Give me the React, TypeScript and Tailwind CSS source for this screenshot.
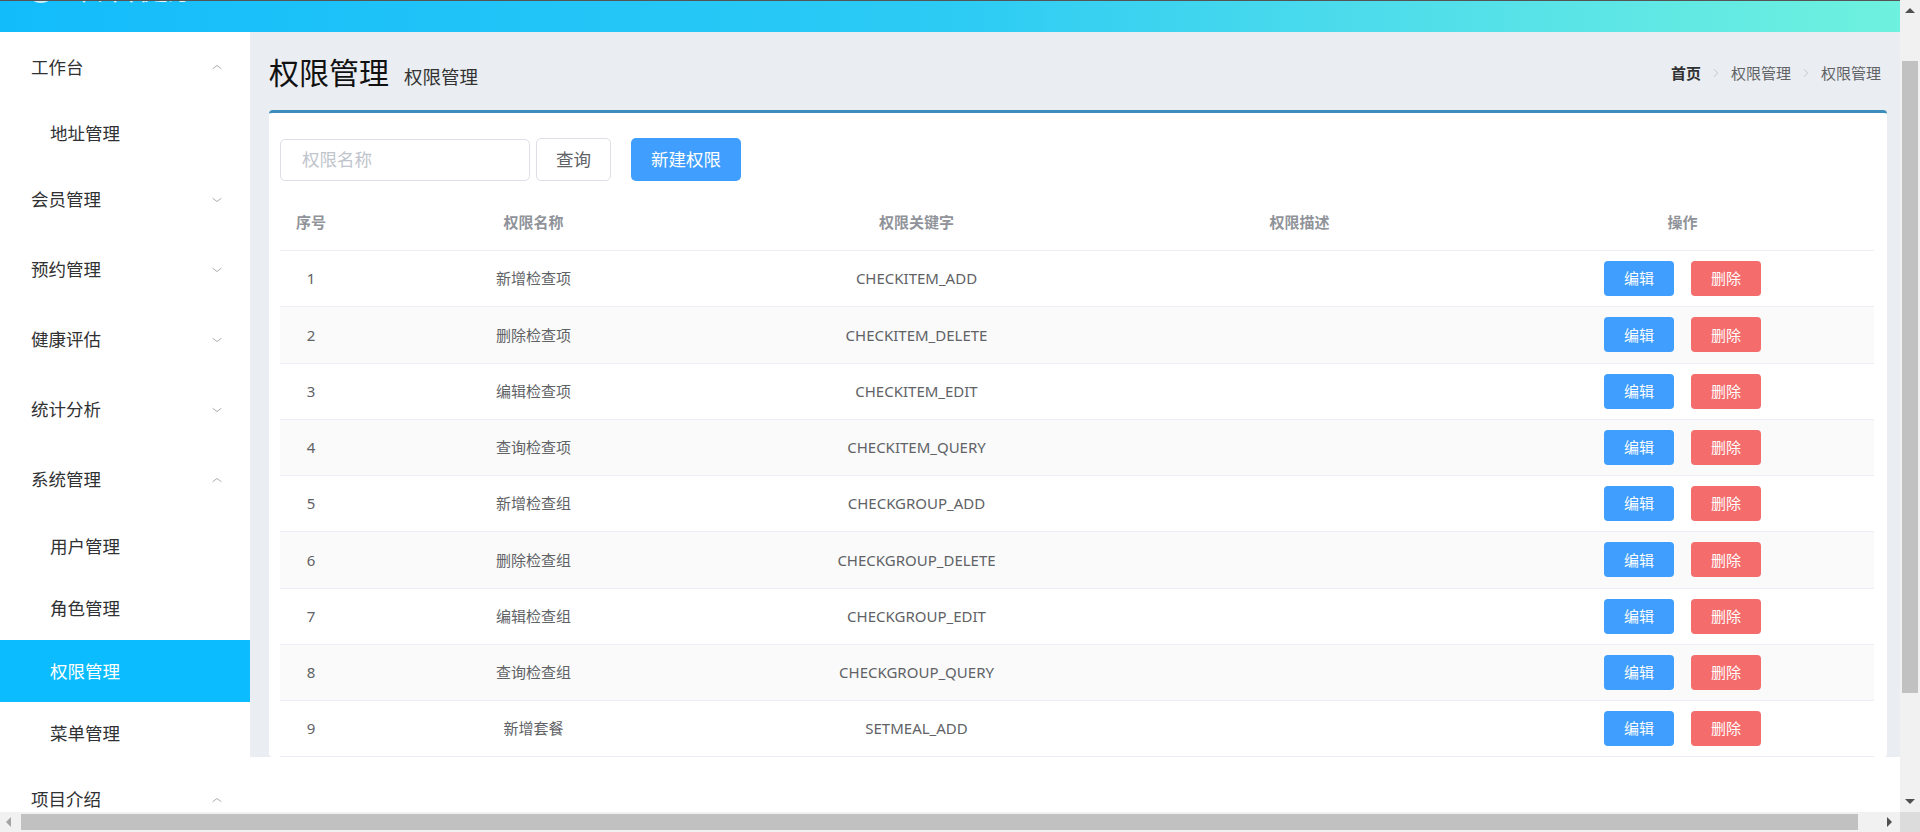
import { ChevronDown, ChevronUp, ChevronRight } from 'lucide-react';

const MENU: { label: string; open?: boolean; children?: string[] }[] = [
  { label: '工作台', open: true, children: ['地址管理'] },
  { label: '会员管理' },
  { label: '预约管理' },
  { label: '健康评估' },
  { label: '统计分析' },
  { label: '系统管理', open: true, children: ['用户管理', '角色管理', '权限管理', '菜单管理'] },
  { label: '项目介绍', open: true },
];

const ROWS = [
  { name: '新增检查项', key: 'CHECKITEM_ADD' },
  { name: '删除检查项', key: 'CHECKITEM_DELETE' },
  { name: '编辑检查项', key: 'CHECKITEM_EDIT' },
  { name: '查询检查项', key: 'CHECKITEM_QUERY' },
  { name: '新增检查组', key: 'CHECKGROUP_ADD' },
  { name: '删除检查组', key: 'CHECKGROUP_DELETE' },
  { name: '编辑检查组', key: 'CHECKGROUP_EDIT' },
  { name: '查询检查组', key: 'CHECKGROUP_QUERY' },
  { name: '新增套餐', key: 'SETMEAL_ADD' },
];

function Sidebar() {
  return (
    <div className="w-[250px] shrink-0 bg-white overflow-hidden">
      {MENU.map((m) => (
        <div key={m.label}>
          <div className="h-[70px] flex items-center justify-between pl-[31px] pr-[25px] text-[17.5px] text-[#303133]">
            <span>{m.label}</span>
            {m.open ? (
              <ChevronUp className="w-[16px] h-[16px] text-[#909399] scale-y-75" strokeWidth={1.3} />
            ) : (
              <ChevronDown className="w-[16px] h-[16px] text-[#909399] scale-y-75" strokeWidth={1.3} />
            )}
          </div>
          {m.children?.map((c) => (
            <div
              key={c}
              className={
                c === '权限管理'
                  ? 'h-[62.5px] flex items-center pl-[50px] text-[17.5px] bg-[#0bbdfe] text-white'
                  : 'h-[62.5px] flex items-center pl-[50px] text-[17.5px] text-[#303133]'
              }
            >
              {c}
            </div>
          ))}
        </div>
      ))}
    </div>
  );
}

function PermTable() {
  return (
    <div className="mt-[14px] text-[15px]">
      <div className="grid grid-cols-[62px_1fr_1fr_1fr_1fr] h-[56px] items-center border-b border-[#ebeef5] font-bold text-[#909399] text-center">
        <div>序号</div>
        <div>权限名称</div>
        <div>权限关键字</div>
        <div>权限描述</div>
        <div>操作</div>
      </div>
      {ROWS.map((r, i) => (
        <div
          key={r.key}
          className={
            i % 2 === 1
              ? 'grid grid-cols-[62px_1fr_1fr_1fr_1fr] h-[56.25px] items-center border-b border-[#ebeef5] text-[#606266] text-center bg-[#fafafa]'
              : 'grid grid-cols-[62px_1fr_1fr_1fr_1fr] h-[56.25px] items-center border-b border-[#ebeef5] text-[#606266] text-center'
          }
        >
          <div>{i + 1}</div>
          <div>{r.name}</div>
          <div>{r.key}</div>
          <div></div>
          <div className="flex justify-center gap-[17px]">
            <button className="w-[70px] h-[35px] rounded-[4px] bg-[#409eff] text-white">编辑</button>
            <button className="w-[70px] h-[35px] rounded-[4px] bg-[#f56c6c] text-white">删除</button>
          </div>
        </div>
      ))}
    </div>
  );
}

export default function App() {
  return (
    <div className="w-[1920px] h-[832px] flex flex-col overflow-hidden font-[Noto_Sans,Noto_Sans_CJK_SC,sans-serif]">
      <div className="flex h-[812px]">
        <div className="w-[1900px] flex flex-col">
          {/* Header (page scrolled, only its lower part shows) */}
          <div className="h-[32px] shrink-0 overflow-hidden border-t border-[#555] bg-gradient-to-r from-[#12bcfb] via-[#2bcbf4] to-[#6ef1de]">
            <div className="-mt-[29px] h-[32px] flex items-center justify-between pl-[26px] pr-[82px]">
              <div className="flex items-center gap-[22px] text-white/90 text-[30px] leading-[32px]">
                <span className="w-[30px] h-[30px] rounded-full border-[3px] border-white/80" />
                <span>传智健康</span>
              </div>
              <span className="w-[22px] h-[22px] rounded-full bg-[#555]" />
            </div>
          </div>

          <div className="flex flex-1 min-h-0">
            <Sidebar />
            <div className="flex-1 flex flex-col bg-white">
              <div className="h-[725px] shrink-0 bg-[#eaedf1] overflow-hidden pt-[24px] pl-[19px] pr-[13px]">
                {/* Title row */}
                <div className="h-[34px] flex items-center justify-between">
                  <div className="flex items-baseline gap-[15px]">
                    <h1 className="text-[30px] leading-[34px] text-[#111]">权限管理</h1>
                    <span className="text-[18.5px] text-[#333]">权限管理</span>
                  </div>
                  <div className="flex items-center text-[15px] pr-[6px]">
                    <span className="font-bold text-[#303133]">首页</span>
                    <ChevronRight className="mx-[8px] w-[14px] h-[14px] text-[#c0c4cc]" strokeWidth={1.5} />
                    <span className="text-[#606266]">权限管理</span>
                    <ChevronRight className="mx-[8px] w-[14px] h-[14px] text-[#c0c4cc]" strokeWidth={1.5} />
                    <span className="text-[#606266]">权限管理</span>
                  </div>
                </div>

                {/* Box */}
                <div className="mt-[20px] bg-white border-t-[3px] border-[#3c8dbc] rounded-[4px] pl-[11px] pr-[13px] pt-[25px]">
                  <div className="h-[43px] flex items-center">
                    <div className="w-[250px] h-[42px] border border-[#dcdfe6] rounded-[5px] flex items-center pl-[21px] text-[17.5px] text-[#c0c4cc]">
                      权限名称
                    </div>
                    <button className="ml-[6px] w-[75px] h-[43px] border border-[#dcdfe6] rounded-[5px] bg-white text-[17.5px] text-[#606266]">
                      查询
                    </button>
                    <button className="ml-[20px] w-[110px] h-[43px] rounded-[5px] bg-[#409eff] text-[17.5px] text-white">
                      新建权限
                    </button>
                  </div>
                  <PermTable />
                </div>
              </div>
            </div>
          </div>
        </div>

        {/* Vertical scrollbar */}
        <div className="w-[20px] bg-[#f1f1f1] flex flex-col items-center">
          <div className="h-[20px] flex items-center justify-center">
            <div className="w-0 h-0 border-l-[5px] border-r-[5px] border-b-[5px] border-l-transparent border-r-transparent border-b-[#505050]" />
          </div>
          <div className="mt-[41px] w-[16px] h-[632px] bg-[#c1c1c1]" />
          <div className="flex-1" />
          <div className="h-[22px] flex items-center justify-center">
            <div className="w-0 h-0 border-l-[5px] border-r-[5px] border-t-[5px] border-l-transparent border-r-transparent border-t-[#505050]" />
          </div>
        </div>
      </div>

      {/* Horizontal scrollbar */}
      <div className="flex h-[20px]">
        <div className="w-[1900px] bg-[#f1f1f1] flex items-center">
          <div className="w-[17px] flex items-center justify-center">
            <div className="w-0 h-0 border-t-[5px] border-b-[5px] border-r-[5px] border-t-transparent border-b-transparent border-r-[#a3a3a3]" />
          </div>
          <div className="ml-[4px] w-[1837px] h-[16px] bg-[#c1c1c1]" />
          <div className="flex-1 flex items-center justify-center pl-[20px]">
            <div className="w-0 h-0 border-t-[5px] border-b-[5px] border-l-[5px] border-t-transparent border-b-transparent border-l-[#505050]" />
          </div>
        </div>
        <div className="w-[20px] bg-[#dcdcdc]" />
      </div>
    </div>
  );
}
